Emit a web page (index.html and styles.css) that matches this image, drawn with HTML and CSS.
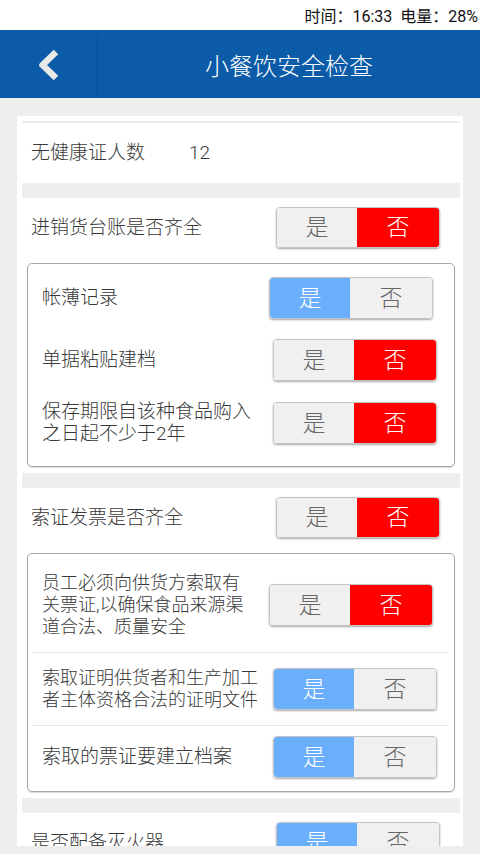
FILE: index.html
```html
<!DOCTYPE html>
<html lang="zh">
<head>
<meta charset="utf-8">
<title>小餐饮安全检查</title>
<link rel="stylesheet" href="styles.css">
</head>
<body>
<div class="status">时间：16:33&nbsp;&nbsp;电量：28%</div>
<header class="header">
  <div class="back">
    <svg width="24" height="32" viewBox="0 0 24 32"><path d="M19 3 L5.5 16 L19 29" fill="none" stroke="#e8e8e8" stroke-width="6.5" stroke-linejoin="round"/></svg>
  </div>
  <div class="divider"></div>
  <div class="title">小餐饮安全检查</div>
</header>
<main class="card">
  <div class="topline"></div>
  <div class="row row--info"><span>无健康证人数</span><span class="value">12</span></div>
  <div class="band"></div>

  <div class="row">
    <span class="label">进销货台账是否齐全</span>
    <div class="toggle"><span class="yes">是</span><span class="no on">否</span></div>
  </div>
  <div class="box box--plain">
    <div class="row">
      <span class="label">帐薄记录</span>
      <div class="toggle toggle--in"><span class="yes on">是</span><span class="no">否</span></div>
    </div>
    <div class="row">
      <span class="label">单据粘贴建档</span>
      <div class="toggle"><span class="yes">是</span><span class="no on">否</span></div>
    </div>
    <div class="row">
      <span class="label">保存期限自该种食品购入<br>之日起不少于2年</span>
      <div class="toggle"><span class="yes">是</span><span class="no on">否</span></div>
    </div>
  </div>
  <div class="band"></div>

  <div class="row">
    <span class="label">索证发票是否齐全</span>
    <div class="toggle"><span class="yes">是</span><span class="no on">否</span></div>
  </div>
  <div class="box box--lined">
    <div class="row">
      <span class="label label--sm">员工必须向供货方索取有<br>关票证,以确保食品来源渠<br>道合法、质量安全</span>
      <div class="toggle toggle--in"><span class="yes">是</span><span class="no on">否</span></div>
    </div>
    <div class="row">
      <span class="label label--sm">索取证明供货者和生产加工<br>者主体资格合法的证明文件</span>
      <div class="toggle"><span class="yes on">是</span><span class="no">否</span></div>
    </div>
    <div class="row">
      <span class="label">索取的票证要建立档案</span>
      <div class="toggle"><span class="yes on">是</span><span class="no">否</span></div>
    </div>
  </div>
  <div class="band"></div>

  <div class="row">
    <span class="label">是否配备灭火器</span>
    <div class="toggle"><span class="yes on">是</span><span class="no">否</span></div>
  </div>
</main>
</body>
</html>
```
FILE: styles.css
```css
* { box-sizing: border-box; }
html, body { margin: 0; padding: 0; }
body {
  width: 480px;
  height: 854px;
  overflow: hidden;
  background: #eeeeee;
  font-family: "Roboto", "Noto Sans CJK SC", sans-serif;
  font-weight: 300;
  color: #333333;
}
.status {
  height: 30px;
  background: #ffffff;
  display: flex;
  align-items: center;
  justify-content: flex-end;
  padding-right: 2px;
  font-size: 16px;
  font-weight: 400;
  color: #111111;
}
.header {
  height: 68px;
  background: #0b5ba8;
  display: flex;
}
.back {
  width: 97px;
  display: flex;
  align-items: center;
  justify-content: center;
}
.back svg { display: block; margin-top: 1px; }
.divider {
  width: 1px;
  margin-top: 6px;
  background: #084d92;
}
.title {
  flex: 1;
  display: flex;
  align-items: center;
  justify-content: center;
  color: #ffffff;
  font-size: 24px;
}
.card {
  margin: 18px 17px 0;
  height: 730px;
  overflow: hidden;
  background: #ffffff;
  padding: 0 3px 0 5px;
}
.topline {
  margin-top: 5px;
  height: 2px;
  background: #ececec;
}
.band {
  height: 15px;
  background: #eeeeee;
}
.row {
  display: flex;
  align-items: center;
  padding: 9px 20px 9px 9px;
  font-size: 19px;
  line-height: 22px;
  color: #383838;
}
.row--info {
  height: 60px;
  padding: 0 9px;
}
.value { margin-left: 44px; }
.label { flex: 1; }
.label--sm { font-size: 18px; line-height: 22px; }
.toggle {
  display: flex;
  width: 164px;
  height: 41px;
  border: 1px solid #c4c4c4;
  border-radius: 4px;
  box-shadow: 0 1px 2px rgba(0, 0, 0, 0.35);
  overflow: hidden;
  font-size: 23px;
  line-height: 1;
}
.toggle span {
  flex: 1;
  display: flex;
  align-items: center;
  justify-content: center;
  background: #f0f0f0;
  color: #666666;
}
.toggle .no { flex: 1.02; }
.toggle .yes.on { background: #6aaefc; color: #ffffff; }
.toggle .no.on { background: #ff0000; color: #ffffff; }
.toggle--in { margin-right: 4px; }

.box {
  margin: 6px 5px;
  border: 1px solid #a4a7aa;
  border-radius: 5px;
  box-shadow: 0 1px 1px rgba(0, 0, 0, 0.15);
}
.box .toggle { height: 42px; }
.box .row { padding: 10px 17px 10px 14px; }
.box--plain { padding: 3px 0 11px; }
.box--lined { padding-top: 4px; }
.box--lined .row {
  margin: 0 5px;
  padding: 14px 12px 14px 9px;
}
.box--lined .row + .row { border-top: 1px solid #e6e6e6; }
.box--lined .row:last-child { padding-top: 10px; padding-bottom: 13px; }
```
